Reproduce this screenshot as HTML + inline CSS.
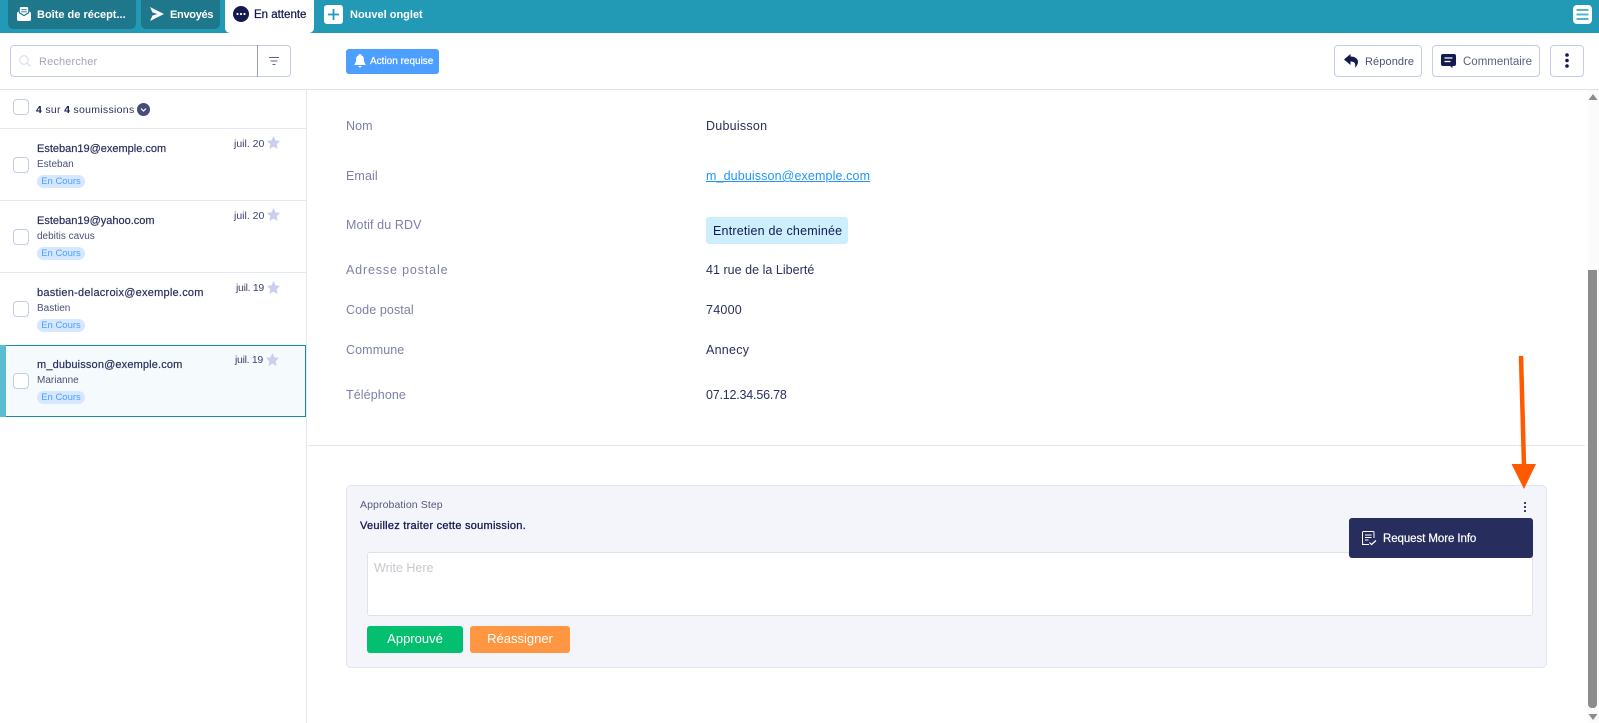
<!DOCTYPE html>
<html lang="fr"><head><meta charset="utf-8"><title>Approbation</title>
<style>
html,body{margin:0;padding:0;background:#fff;width:1599px;height:723px;overflow:hidden}
body{position:relative;font-family:"Liberation Sans",sans-serif;color:#1b2150}
.a,.t{position:absolute;box-sizing:border-box}
.t{white-space:nowrap;line-height:20px;height:20px}
.box{border:1px solid #c3cbee;border-radius:4px;background:#fff}
.cb{position:absolute;left:13px;width:16px;height:16px;border:1px solid #c3cbee;border-radius:4px;background:#fff;box-sizing:border-box}
.em{font-size:11px;left:37px;color:#2a2f5c;font-weight:400;-webkit-text-stroke:.2px #2a2f5c}
.sub{font-size:10px;left:37px;color:#4a4f77}
.pill{position:absolute;left:37px;width:48px;height:13px;border-radius:7px;background:#d5e8ff;color:#4c9eff;font-size:9.5px;line-height:13px;text-align:center}
.dt{font-size:10.5px;color:#3c4170}
.lb{left:346px;font-size:12.5px;color:#7d80a8;letter-spacing:.1px}
.vl{left:706px;font-size:12.5px;color:#2a2f5c;letter-spacing:.25px}
.hl{position:absolute;background:#e6e7ef}
</style></head><body>

<!-- top bar -->
<div class="a" style="left:0;top:0;width:1599px;height:33px;background:#239ab5"></div>
<div class="a" style="left:8px;top:0;width:128px;height:29px;background:#1f778c;border-radius:0 0 5px 5px"></div>
<div class="a" style="left:141px;top:0;width:79px;height:29px;background:#1f778c;border-radius:0 0 5px 5px"></div>
<div class="a" style="left:225px;top:0;width:89px;height:33px;background:#fff;border-radius:0 0 5px 5px"></div>

<svg class="a" style="left:17px;top:7px" width="14" height="14" viewBox="0 0 15 16" preserveAspectRatio="none"><path fill="#fff" d="M3 1.500A1.500 1.500 0 0 1 4.500 0h6A1.500 1.500 0 0 1 12 1.500V6l-4.500 3L3 6z"/><path fill="#1f778c" d="M4.500 2.500h6v1h-6zM4.500 5h6v1h-6z"/><path fill="#fff" d="M0 6.500l2-1.300v1.800L7.500 10.500 13 7V5.200l2 1.300V14a2 2 0 0 1-2 2H2a2 2 0 0 1-2-2z"/></svg>
<div class="t" style="left:37px;top:5px;font-size:11px;font-weight:700;color:#fff">Boîte de récept...</div>

<svg class="a" style="left:150px;top:7px" width="14" height="14" viewBox="0 0 14 14"><path fill="#fff" d="M0 0l14 7L0 14l2.500-5.500L7.500 7l-5-1.500z"/></svg>
<div class="t" style="left:170px;top:5px;font-size:11px;font-weight:700;color:#fff;letter-spacing:-.3px">Envoyés</div>

<svg class="a" style="left:233px;top:6px" width="16" height="16" viewBox="0 0 16 16"><circle cx="8" cy="8" r="8" fill="#14194f"/><circle cx="4.500" cy="8" r="1.100" fill="#fff"/><circle cx="8" cy="8" r="1.100" fill="#fff"/><circle cx="11.500" cy="8" r="1.100" fill="#fff"/></svg>
<div class="t" style="left:254px;top:5px;font-size:11.500px;color:#14194f;-webkit-text-stroke:.25px #14194f">En attente</div>

<div class="a" style="left:324px;top:5px;width:19px;height:19px;background:#fff;border-radius:3px"></div>
<svg class="a" style="left:324px;top:5px" width="19" height="19" viewBox="0 0 19 19"><path stroke="#239ab5" stroke-width="1.800" d="M9.500 4v11M4 9.500h11"/></svg>
<div class="t" style="left:350px;top:5px;font-size:11px;font-weight:700;color:#fff">Nouvel onglet</div>

<div class="a" style="left:1573px;top:5px;width:19px;height:19px;background:#fff;border-radius:4px"></div>
<svg class="a" style="left:1573px;top:5px" width="19" height="19" viewBox="0 0 19 19"><path stroke="#53b4cb" stroke-width="2" d="M3.500 5h12M3.500 9.500h12M3.500 14h12"/></svg>

<!-- search -->
<div class="a box" style="left:10px;top:45px;width:281px;height:32px"></div>
<div class="a" style="left:257px;top:45px;width:1px;height:32px;background:#9a9db5"></div>
<svg class="a" style="left:19px;top:55px" width="12" height="12" viewBox="0 0 12 12" fill="none" stroke="#d3d8ee" stroke-width="1"><circle cx="5" cy="5" r="4.300"/><path d="M8 8l3.500 3.500"/></svg>
<div class="t" style="left:39px;top:52px;font-size:11px;color:#a3a5ba;letter-spacing:.15px">Rechercher</div>
<svg class="a" style="left:269px;top:57px" width="10" height="9" viewBox="0 0 10 9"><path stroke="#5f6488" stroke-width="1" d="M0 .5h10M1.500 4h7M3.500 7.500h3"/></svg>

<!-- action -->
<div class="a" style="left:346px;top:49px;width:93px;height:25px;background:#4c9eff;border-radius:3px"></div>
<svg class="a" style="left:354px;top:54px" width="12" height="14" viewBox="0 0 12 14"><path fill="#fff" d="M6 0c1 0 1.500.7 1.600 1.500C9.500 2.300 10 4 10 6c0 2 .8 3.500 2 5H0c1.200-1.500 2-3 2-5 0-2 .5-3.700 2.400-4.500C4.500.7 5 0 6 0zM4.500 12h3a1.500 1.500 0 0 1-3 0z"/></svg>
<div class="t" style="left:370px;top:52px;font-size:10px;color:#fff;-webkit-text-stroke:.2px #fff">Action requise</div>

<!-- right buttons -->
<div class="a box" style="left:1334px;top:45px;width:88px;height:32px"></div>
<svg class="a" style="left:1344px;top:54px" width="14" height="14" viewBox="0 0 14 14"><path fill="#14194f" d="M6.500 0L0 5.500 6.500 11V7.500c2.500 0 4.500.6 4.800 3.500 0 1-.1 2-.6 3C13 12 14 10 14 8c0-3.500-3-5.500-7.500-5.500z"/></svg>
<div class="t" style="left:1365px;top:52px;font-size:11px;color:#4d5178;letter-spacing:.1px">Répondre</div>

<div class="a box" style="left:1432px;top:45px;width:108px;height:32px"></div>
<svg class="a" style="left:1441px;top:54px" width="15" height="14" viewBox="0 0 15 14"><path fill="#14194f" d="M2 0h11a2 2 0 0 1 2 2v8a2 2 0 0 1-2 2h-1.500v2L9 12H2a2 2 0 0 1-2-2V2a2 2 0 0 1 2-2z"/><path stroke="#fff" stroke-width="1.300" d="M3.500 4h8M3.500 7.500h6"/></svg>
<div class="t" style="left:1463px;top:52px;font-size:11.500px;color:#5d6185;letter-spacing:0">Commentaire</div>

<div class="a box" style="left:1550px;top:45px;width:34px;height:32px"></div>
<svg class="a" style="left:1564px;top:52px" width="6" height="18" viewBox="0 0 6 18"><circle cx="3" cy="3" r="1.800" fill="#14194f"/><circle cx="3" cy="8.500" r="1.800" fill="#14194f"/><circle cx="3" cy="14" r="1.800" fill="#14194f"/></svg>

<!-- structure lines -->
<div class="hl" style="left:0;top:89px;width:1599px;height:1px;background:#e2e2e6"></div>
<div class="hl" style="left:306px;top:90px;width:1px;height:633px"></div>

<!-- list header -->
<div class="cb" style="top:99px"></div>
<div class="t" style="left:36px;top:100px;font-size:10.500px;color:#2a2f5c;letter-spacing:.3px"><b style="color:#14194f">4</b> sur <b style="color:#14194f">4</b> soumissions</div>
<svg class="a" style="left:137px;top:103px" width="13" height="13" viewBox="0 0 13 13"><circle cx="6.500" cy="6.500" r="6.500" fill="#454c7c"/><path d="M4 5.500l2.500 2.500L9 5.500" fill="none" stroke="#fff" stroke-width="1.200"/></svg>

<!-- list items -->
<div class="hl" style="left:0;top:128px;width:306px;height:1px"></div>
<div class="hl" style="left:0;top:200px;width:306px;height:1px"></div>
<div class="hl" style="left:0;top:272px;width:306px;height:1px"></div>

<div class="t em" style="top:139px">Esteban19@exemple.com</div>
<div class="t sub" style="top:155px">Esteban</div>
<div class="pill" style="top:175px">En Cours</div>
<div class="cb" style="top:157px"></div>
<div class="t dt" style="left:234px;top:134px">juil. 20</div>
<svg class="a" style="left:267px;top:136px" width="13" height="13" viewBox="0 0 24 24"><path fill="#c9cfec" d="M12 0l3.700 8.100 8.300 1-6.100 5.900 1.600 8.900L12 19.500l-7.500 4.400L6.100 15 0 9.100l8.300-1z"/></svg>

<div class="t em" style="top:211px">Esteban19@yahoo.com</div>
<div class="t sub" style="top:227px">debitis cavus</div>
<div class="pill" style="top:247px">En Cours</div>
<div class="cb" style="top:229px"></div>
<div class="t dt" style="left:234px;top:206px">juil. 20</div>
<svg class="a" style="left:267px;top:208px" width="13" height="13" viewBox="0 0 24 24"><path fill="#c9cfec" d="M12 0l3.700 8.100 8.300 1-6.100 5.900 1.600 8.900L12 19.500l-7.500 4.400L6.100 15 0 9.100l8.300-1z"/></svg>

<div class="t em" style="top:283px;letter-spacing:.24px">bastien-delacroix@exemple.com</div>
<div class="t sub" style="top:299px">Bastien</div>
<div class="pill" style="top:319px">En Cours</div>
<div class="cb" style="top:301px"></div>
<div class="t dt" style="left:236px;top:278px;letter-spacing:-.3px">juil. 19</div>
<svg class="a" style="left:267px;top:281px" width="13" height="13" viewBox="0 0 24 24"><path fill="#c9cfec" d="M12 0l3.700 8.100 8.300 1-6.100 5.900 1.600 8.900L12 19.500l-7.500 4.400L6.100 15 0 9.100l8.300-1z"/></svg>

<div class="a" style="left:0;top:345px;width:306px;height:72px;background:#f5fbfc;border:1px solid #1a8a9c;border-left:0"></div>
<div class="a" style="left:0;top:345px;width:6px;height:72px;background:#5bbdd2"></div>
<div class="t em" style="top:355px;letter-spacing:.15px">m_dubuisson@exemple.com</div>
<div class="t sub" style="top:371px">Marianne</div>
<div class="pill" style="top:391px">En Cours</div>
<div class="cb" style="top:373px"></div>
<div class="t dt" style="left:235px;top:350px;letter-spacing:-.3px">juil. 19</div>
<svg class="a" style="left:266px;top:353px" width="13" height="13" viewBox="0 0 24 24"><path fill="#c9cfec" d="M12 0l3.700 8.100 8.300 1-6.100 5.900 1.600 8.900L12 19.500l-7.500 4.400L6.100 15 0 9.100l8.300-1z"/></svg>

<!-- fields -->
<div class="t lb" style="top:116px">Nom</div><div class="t vl" style="top:116px">Dubuisson</div>
<div class="t lb" style="top:166px">Email</div><div class="t vl" style="top:166px;color:#2196f3;text-decoration:underline;letter-spacing:.12px">m_dubuisson@exemple.com</div>
<div class="t lb" style="top:215px">Motif du RDV</div>
<div class="a" style="left:706px;top:217px;width:142px;height:27px;background:#cdeffd;border-radius:3px"></div>
<div class="t vl" style="left:713px;top:221px;color:#14194f;letter-spacing:.2px">Entretien de cheminée</div>
<div class="t lb" style="top:260px;letter-spacing:.85px">Adresse postale</div><div class="t vl" style="top:260px;letter-spacing:.03px">41 rue de la Liberté</div>
<div class="t lb" style="top:300px">Code postal</div><div class="t vl" style="top:300px">74000</div>
<div class="t lb" style="top:340px">Commune</div><div class="t vl" style="top:340px">Annecy</div>
<div class="t lb" style="top:385px">Téléphone</div><div class="t vl" style="top:385px;letter-spacing:-.2px">07.12.34.56.78</div>

<div class="hl" style="left:307px;top:445px;width:1278px;height:1px"></div>

<!-- approval -->
<div class="a" style="left:346px;top:485px;width:1201px;height:183px;background:#f4f5fb;border:1px solid #e2e4f0;border-radius:5px"></div>
<div class="t" style="left:360px;top:495px;font-size:10.500px;color:#55597c;letter-spacing:.1px">Approbation Step</div>
<div class="t" style="left:360px;top:516px;font-size:11px;color:#14194f;letter-spacing:.26px;-webkit-text-stroke:.3px #14194f">Veuillez traiter cette soumission.</div>
<div class="a" style="left:367px;top:552px;width:1166px;height:64px;background:#fff;border:1px solid #dfe1ee;border-radius:3px"></div>
<div class="t" style="left:374px;top:558px;font-size:12.500px;color:#c8c8ce">Write Here</div>
<div class="a" style="left:367px;top:626px;width:96px;height:27px;background:#04bf6f;border-radius:3px;color:#fff;font-size:13px;line-height:26px;text-align:center">Approuvé</div>
<div class="a" style="left:470px;top:626px;width:100px;height:27px;background:#ff9742;border-radius:3px;color:#fff;font-size:13px;line-height:26px;text-align:center">Réassigner</div>

<svg class="a" style="left:1523px;top:501px" width="4" height="12" viewBox="0 0 4 12"><rect x="1" y="1" width="2" height="2" fill="#3a3f66"/><rect x="1" y="5" width="2" height="2" fill="#3a3f66"/><rect x="1" y="9" width="2" height="2" fill="#3a3f66"/></svg>

<div class="a" style="left:1349px;top:518px;width:184px;height:40px;background:#272e5e;border-radius:3px"></div>
<svg class="a" style="left:1361px;top:531px" width="16" height="15" viewBox="0 0 16 15" fill="none" stroke="#fff" stroke-width="1"><path d="M13 7V1.500a1 1 0 0 0-1-1H2.500a1 1 0 0 0-1 1V12a2 2 0 0 0 1 1.500H8"/><path d="M1 13.500h4"/><path d="M4 4h6.500M4 6.500h6.500M4 9h3.500"/><path d="M8.500 11.500l2 2 4.500-4" stroke-width="1.200"/></svg>
<div class="t" style="left:1383px;top:529px;font-size:11.500px;color:#fff;letter-spacing:-.08px;-webkit-text-stroke:.2px #fff">Request More Info</div>

<!-- orange arrow -->
<svg class="a" style="left:1505px;top:350px" width="40" height="145" viewBox="0 0 40 145"><path d="M16 6l3 110" stroke="#ff5a00" stroke-width="4.500" fill="none"/><path d="M6.500 114H31L19 139z" fill="#ff5a00"/></svg>

<!-- scrollbar -->
<div class="a" style="left:1587px;top:90px;width:12px;height:633px;background:#fbfbfb"></div>
<svg class="a" style="left:1587px;top:92px" width="12" height="10" viewBox="0 0 12 10"><path d="M6 2l4.500 6h-9z" fill="#8c8c8c"/></svg>
<div class="a" style="left:1588px;top:270px;width:9px;height:438px;background:#8c8c8c;border-radius:0 0 4px 4px"></div>
<svg class="a" style="left:1587px;top:712px" width="12" height="10" viewBox="0 0 12 10"><path d="M1.500 2h9L6 8z" fill="#8c8c8c"/></svg>

</body></html>
